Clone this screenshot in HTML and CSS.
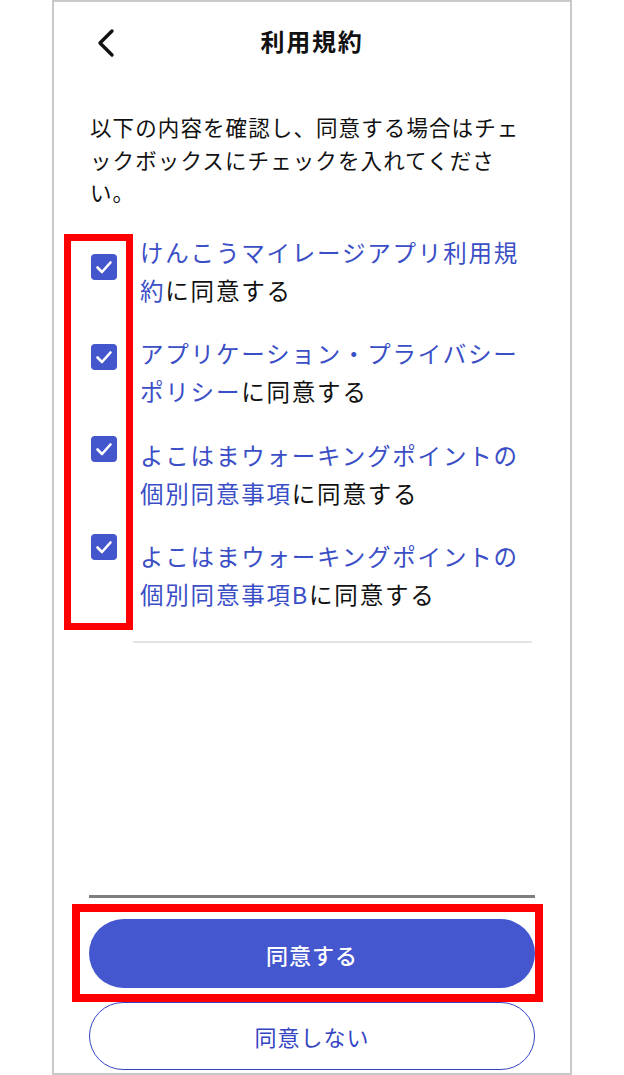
FILE: index.html
```html
<!DOCTYPE html>
<html lang="ja">
<head>
<meta charset="utf-8">
<title>利用規約</title>
<link rel="stylesheet" href="styles.css">
</head>
<body>
<div class="frame">
  <header class="header">
    <svg class="back" width="22" height="30" viewBox="0 0 22 30">
      <polyline points="16,3 4,15 16,27" fill="none" stroke="#111" stroke-width="3.4" stroke-linecap="round" stroke-linejoin="round"/>
    </svg>
    <h1 class="title">利用規約</h1>
  </header>
  <main class="content">
    <p class="intro">以下の内容を確認し、同意する場合はチェックボックスにチェックを入れてください。</p>
    <ul class="items">
      <li class="item">
        <span class="cb"><svg width="26" height="26" viewBox="0 0 26 26"><polyline points="6.5,13.5 11,18 19.5,8.5" fill="none" stroke="#fff" stroke-width="2.6" stroke-linecap="round" stroke-linejoin="round"/></svg></span>
        <p class="label"><span class="link">けんこうマイレージアプリ利用規約</span>に同意する</p>
      </li>
      <li class="item">
        <span class="cb"><svg width="26" height="26" viewBox="0 0 26 26"><polyline points="6.5,13.5 11,18 19.5,8.5" fill="none" stroke="#fff" stroke-width="2.6" stroke-linecap="round" stroke-linejoin="round"/></svg></span>
        <p class="label"><span class="link">アプリケーション・プライバシーポリシー</span>に同意する</p>
      </li>
      <li class="item">
        <span class="cb"><svg width="26" height="26" viewBox="0 0 26 26"><polyline points="6.5,13.5 11,18 19.5,8.5" fill="none" stroke="#fff" stroke-width="2.6" stroke-linecap="round" stroke-linejoin="round"/></svg></span>
        <p class="label"><span class="link">よこはまウォーキングポイントの個別同意事項</span>に同意する</p>
      </li>
      <li class="item">
        <span class="cb"><svg width="26" height="26" viewBox="0 0 26 26"><polyline points="6.5,13.5 11,18 19.5,8.5" fill="none" stroke="#fff" stroke-width="2.6" stroke-linecap="round" stroke-linejoin="round"/></svg></span>
        <p class="label"><span class="link">よこはまウォーキングポイントの個別同意事項B</span>に同意する</p>
      </li>
    </ul>
    <div class="divider"></div>
    <div class="spacer"></div>
    <div class="footer">
      <div class="sep"></div>
      <button class="btn btn-primary" type="button">同意する</button>
      <button class="btn btn-secondary" type="button">同意しない</button>
    </div>
  </main>
</div>
<div class="mark mark-checks"></div>
<div class="mark mark-button"></div>
</body>
</html>
```

FILE: styles.css
```css
html, body {
  margin: 0;
  padding: 0;
  background: #fff;
}
body {
  font-family: "Noto Sans CJK JP", "Noto Sans", sans-serif;
  color: #111;
  position: relative;
  width: 624px;
  height: 1075px;
  overflow: hidden;
}
.frame {
  box-sizing: border-box;
  margin-left: 52px;
  width: 520px;
  height: 1075px;
  border: 2px solid #c9c9c9;
  display: flex;
  flex-direction: column;
}
.header {
  position: relative;
  height: 84px;
  display: flex;
  align-items: center;
  justify-content: center;
  flex: none;
}
.back {
  position: absolute;
  left: 42px;
  top: 26px;
}
.title {
  margin: -7px 0 0;
  font-size: 24px;
  font-weight: 700;
  letter-spacing: 1.7px;
  line-height: 30px;
}
.intro {
  margin: 25px 0 0;
  font-size: 21.5px;
  letter-spacing: 1.1px;
  line-height: 32.5px;
}
.content {
  flex: 1;
  display: flex;
  flex-direction: column;
  padding: 0 35px 0 36px;
}
.items {
  list-style: none;
  margin: 24px 0 0;
  padding: 0;
  display: flex;
  flex-direction: column;
  gap: 25.5px;
}
.item {
  display: flex;
  align-items: flex-start;
}
.cb {
  flex: none;
  width: 26px;
  height: 26px;
  border-radius: 4px;
  background: #4456cc;
  margin-left: 1px;
  margin-right: 23px;
  display: flex;
}
.item:nth-child(1) .cb { margin-top: 21px; }
.item:nth-child(2) .cb { margin-top: 10px; }
.item:nth-child(3) .cb { margin-top: 0; }
.item:nth-child(4) .cb { margin-top: -3px; }
.label {
  margin: 0;
  font-size: 23.5px;
  letter-spacing: 1.8px;
  line-height: 38px;
  color: #111;
}
.link {
  color: #3a4ec6;
}
.divider {
  margin: 28px 3px 0 43px;
  height: 2px;
  background: #e4e4e4;
}
.spacer {
  flex: 1;
}
.footer {
  display: flex;
  flex-direction: column;
  padding-bottom: 3px;
}
.sep {
  margin-left: -1px;
  height: 3px;
  background: #7e7e7e;
}
.btn {
  font-family: "Noto Sans CJK JP", "Noto Sans", sans-serif;
  font-size: 22px;
  letter-spacing: 1px;
  margin-left: -1px;
  border-radius: 35px;
  cursor: pointer;
}
.btn-primary {
  margin-top: 21px;
  height: 69px;
  border: none;
  background: #4457cf;
  color: #fff;
  font-weight: 500;
}
.btn-secondary {
  margin-top: 14px;
  height: 68px;
  border: 1.5px solid #3545c2;
  background: #fff;
  color: #3545c2;
}
.mark {
  position: absolute;
  box-sizing: border-box;
  border: 7.5px solid #ff0000;
  pointer-events: none;
}
.mark-checks {
  left: 64px;
  top: 234px;
  width: 69px;
  height: 396px;
}
.mark-button {
  left: 72px;
  top: 904px;
  width: 471px;
  height: 98px;
  border-width: 8px;
}
```
